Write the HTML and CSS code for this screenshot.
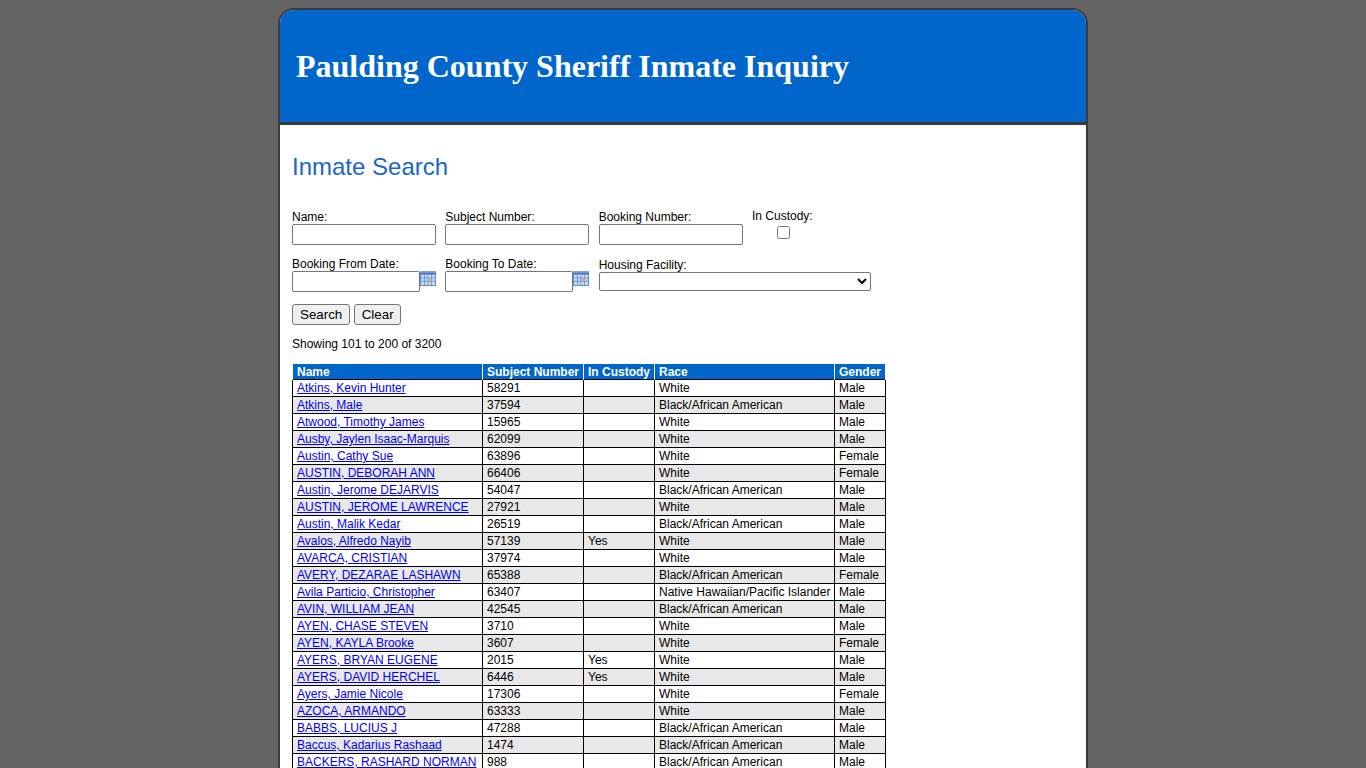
FILE: index.html
```html
<!DOCTYPE html>
<html lang="en">
<head>
<meta charset="utf-8">
<title>Paulding County Sheriff Inmate Inquiry</title>
<link rel="stylesheet" href="styles.css">
</head>
<body>
<div class="page">
  <header class="banner"><h1>Paulding County Sheriff Inmate Inquiry</h1></header>
  <main class="content">
    <h2>Inmate Search</h2>
    <form class="search">
      <div class="form-row row-one">
        <div class="field"><label>Name:</label><input type="text" class="text-input"></div>
        <div class="field"><label>Subject Number:</label><input type="text" class="text-input"></div>
        <div class="field"><label>Booking Number:</label><input type="text" class="text-input"></div>
        <div class="field custody"><label>In Custody:</label><input type="checkbox" class="check"></div>
      </div>
      <div class="form-row row-two">
        <div class="field"><label>Booking From Date:</label><div class="date-wrap"><input type="text" class="date-input">
          <svg class="cal" viewBox="0 0 16 16" preserveAspectRatio="none" aria-hidden="true"><rect width="16" height="16" fill="#5f8ad6"/><rect y="0" width="16" height="3" fill="#3f68b8"/><path d="M1 0v2M3 0v2M5 0v2M7 0v2M9 0v2M11 0v2M13 0v2M15 0v2" stroke="#cfdcf3" stroke-width="1"/><rect x="1" y="4" width="14" height="11" fill="#c9d9f3"/><path d="M4.500 4v11M8 4v11M11.500 4v11M1 7.500h14M1 11h14" stroke="#6f97dc" stroke-width="1"/><rect x="8.500" y="8" width="3" height="3" fill="#e8a878"/></svg>
        </div></div>
        <div class="field"><label>Booking To Date:</label><div class="date-wrap"><input type="text" class="date-input">
          <svg class="cal" viewBox="0 0 16 16" preserveAspectRatio="none" aria-hidden="true"><rect width="16" height="16" fill="#5f8ad6"/><rect y="0" width="16" height="3" fill="#3f68b8"/><path d="M1 0v2M3 0v2M5 0v2M7 0v2M9 0v2M11 0v2M13 0v2M15 0v2" stroke="#cfdcf3" stroke-width="1"/><rect x="1" y="4" width="14" height="11" fill="#c9d9f3"/><path d="M4.500 4v11M8 4v11M11.500 4v11M1 7.500h14M1 11h14" stroke="#6f97dc" stroke-width="1"/><rect x="8.500" y="8" width="3" height="3" fill="#e8a878"/></svg>
        </div></div>
        <div class="field facility"><label>Housing Facility:</label><select class="select"><option></option></select></div>
      </div>
      <div class="buttons"><button type="button">Search</button><button type="button" class="clear">Clear</button></div>
    </form>
    <p class="showing">Showing 101 to 200 of 3200</p>
    <table class="results">
      <thead><tr><th class="c-name">Name</th><th class="c-num">Subject Number</th><th class="c-cust">In Custody</th><th class="c-race">Race</th><th class="c-gen">Gender</th></tr></thead>
      <tbody>
        <tr><td><a href="#">Atkins, Kevin Hunter</a></td><td>58291</td><td></td><td>White</td><td>Male</td></tr>
        <tr><td><a href="#">Atkins, Male</a></td><td>37594</td><td></td><td>Black/African American</td><td>Male</td></tr>
        <tr><td><a href="#">Atwood, Timothy James</a></td><td>15965</td><td></td><td>White</td><td>Male</td></tr>
        <tr><td><a href="#">Ausby, Jaylen Isaac-Marquis</a></td><td>62099</td><td></td><td>White</td><td>Male</td></tr>
        <tr><td><a href="#">Austin, Cathy Sue</a></td><td>63896</td><td></td><td>White</td><td>Female</td></tr>
        <tr><td><a href="#">AUSTIN, DEBORAH ANN</a></td><td>66406</td><td></td><td>White</td><td>Female</td></tr>
        <tr><td><a href="#">Austin, Jerome DEJARVIS</a></td><td>54047</td><td></td><td>Black/African American</td><td>Male</td></tr>
        <tr><td><a href="#">AUSTIN, JEROME LAWRENCE</a></td><td>27921</td><td></td><td>White</td><td>Male</td></tr>
        <tr><td><a href="#">Austin, Malik Kedar</a></td><td>26519</td><td></td><td>Black/African American</td><td>Male</td></tr>
        <tr><td><a href="#">Avalos, Alfredo Nayib</a></td><td>57139</td><td>Yes</td><td>White</td><td>Male</td></tr>
        <tr><td><a href="#">AVARCA, CRISTIAN</a></td><td>37974</td><td></td><td>White</td><td>Male</td></tr>
        <tr><td><a href="#">AVERY, DEZARAE LASHAWN</a></td><td>65388</td><td></td><td>Black/African American</td><td>Female</td></tr>
        <tr><td><a href="#">Avila Particio, Christopher</a></td><td>63407</td><td></td><td>Native Hawaiian/Pacific Islander</td><td>Male</td></tr>
        <tr><td><a href="#">AVIN, WILLIAM JEAN</a></td><td>42545</td><td></td><td>Black/African American</td><td>Male</td></tr>
        <tr><td><a href="#">AYEN, CHASE STEVEN</a></td><td>3710</td><td></td><td>White</td><td>Male</td></tr>
        <tr><td><a href="#">AYEN, KAYLA Brooke</a></td><td>3607</td><td></td><td>White</td><td>Female</td></tr>
        <tr><td><a href="#">AYERS, BRYAN EUGENE</a></td><td>2015</td><td>Yes</td><td>White</td><td>Male</td></tr>
        <tr><td><a href="#">AYERS, DAVID HERCHEL</a></td><td>6446</td><td>Yes</td><td>White</td><td>Male</td></tr>
        <tr><td><a href="#">Ayers, Jamie Nicole</a></td><td>17306</td><td></td><td>White</td><td>Female</td></tr>
        <tr><td><a href="#">AZOCA, ARMANDO</a></td><td>63333</td><td></td><td>White</td><td>Male</td></tr>
        <tr><td><a href="#">BABBS, LUCIUS J</a></td><td>47288</td><td></td><td>Black/African American</td><td>Male</td></tr>
        <tr><td><a href="#">Baccus, Kadarius Rashaad</a></td><td>1474</td><td></td><td>Black/African American</td><td>Male</td></tr>
        <tr><td><a href="#">BACKERS, RASHARD NORMAN</a></td><td>988</td><td></td><td>Black/African American</td><td>Male</td></tr>
      </tbody>
    </table>
  </main>
</div>
</body>
</html>
```
FILE: styles.css
```css
html, body { margin: 0; padding: 0; }
body {
  background: #636363;
  font-family: "Liberation Sans", Arial, sans-serif;
  font-size: 12px;
  color: #000;
}
.page {
  box-sizing: border-box;
  width: 810px;
  margin: 8px auto 0;
  background: #fff;
  border: 2px solid #3a3a3a;
  border-bottom: 0;
  border-radius: 16px 16px 0 0;
  overflow: hidden;
}
.banner {
  box-sizing: border-box;
  height: 115px;
  background: #0066cc;
  border-bottom: 3px solid #3a3a3a;
  padding: 0 16px;
  display: flex;
  align-items: center;
}
.banner h1 {
  margin: 0;
  font-family: "Liberation Serif", "Times New Roman", serif;
  font-size: 32px;
  font-weight: bold;
  color: #fff;
  line-height: 36px;
}
.content { padding: 28px 12px 20px; }
h2 {
  margin: 0;
  font-size: 24px;
  font-weight: normal;
  line-height: 28px;
  color: #1a66c2;
}
.search { margin-top: 29px; }
.form-row { display: flex; align-items: flex-start; }
.row-one { gap: 9.33px; }
.row-two { gap: 9.33px; margin-top: 12px; }
.field { display: flex; flex-direction: column; }
.field label { line-height: 14px; height: 14px; }
.text-input {
  box-sizing: border-box;
  width: 144px;
  height: 21px;
  margin: 0;
  border: 1px solid #767676;
  border-radius: 2px;
  padding: 1px 2px;
}
.custody { margin-top: -1px; align-items: flex-start; }
.check { margin: 3px 0 0 25px; width: 13px; height: 13px; }
.date-wrap { display: flex; align-items: flex-start; width: 144px; }
.date-input {
  box-sizing: border-box;
  width: 128px;
  height: 21px;
  margin: 0;
  border: 1px solid #767676;
  border-radius: 2px;
  padding: 1px 2px;
}
.cal { width: 16px; height: 15px; display: block; }
.facility { margin-top: 1px; }
.select {
  box-sizing: border-box;
  width: 272px;
  height: 19px;
  margin: 0;
  background: #fff;
  border: 1px solid #767676;
  border-radius: 2px;
  font-size: 12px;
  font-family: "Liberation Sans", Arial, sans-serif;
}
.buttons { display: flex; gap: 4px; margin-top: 12px; }
.buttons button {
  box-sizing: border-box;
  height: 21px;
  margin: 0;
  padding: 1px 7px;
  background: #efefef;
  border: 1px solid #767676;
  border-radius: 3px;
  font-family: "Liberation Sans", Arial, sans-serif;
  font-size: 13.333px;
  color: #000;
}
.buttons .clear { padding: 1px 6.5px; }
.showing { margin: 12px 0 0; line-height: 14px; }
.results {
  margin: 13px 0 0;
  border-collapse: collapse;
  table-layout: fixed;
  width: 594px;
  font-size: 12px;
}
.results th {
  background: #0066cc;
  color: #fff;
  font-weight: bold;
  text-align: left;
  padding: 1px 4px 0;
  height: 14px;
  line-height: 14px;
  border-left: 1px solid #fff;
  border-right: 1px solid #fff;
  white-space: nowrap;
}
.results td {
  border: 1px solid #000;
  padding: 0 4px;
  height: 16px;
  line-height: 16px;
  white-space: nowrap;
  overflow: hidden;
}
.results tbody tr:nth-child(even) td { background: #e8e8e8; }
.results a { color: #0000ee; }
.c-name { width: 181px; }
.c-num { width: 92px; }
.c-cust { width: 62px; }
.c-race { width: 171px; }
.c-gen { width: 42px; }
```
